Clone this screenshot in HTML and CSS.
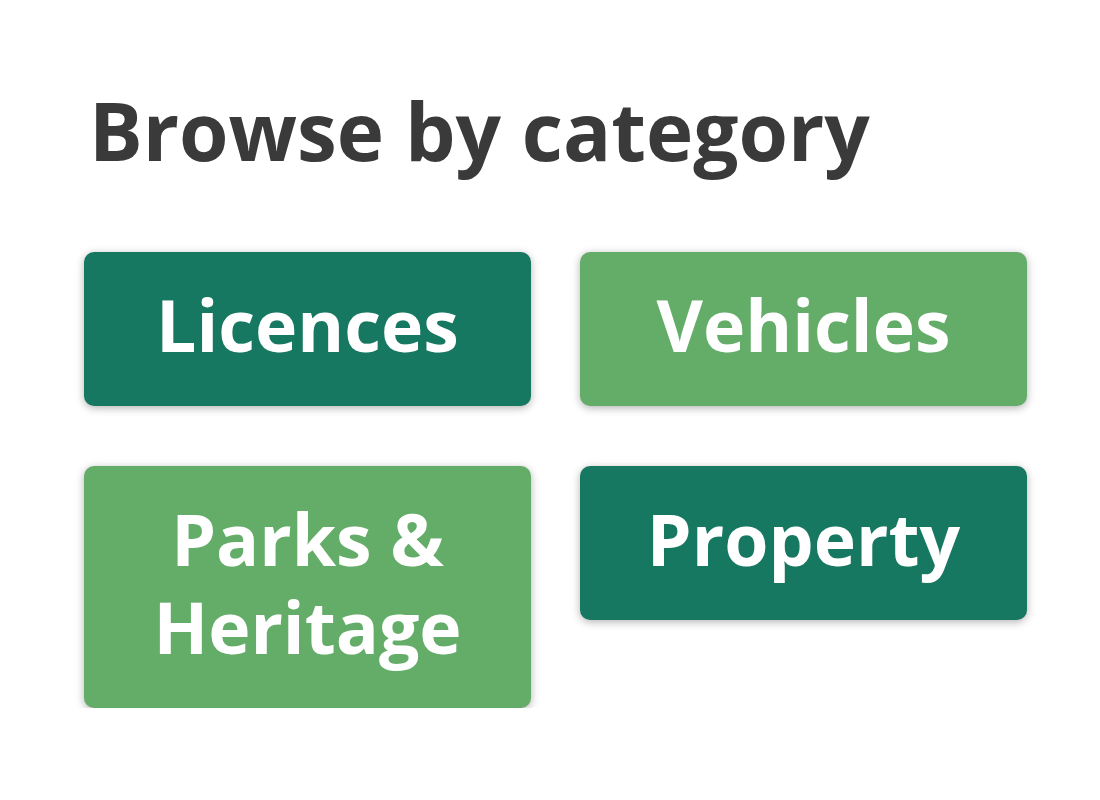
FILE: index.html
```html
<!DOCTYPE html>
<html>
<head>
<meta charset="utf-8">
<link rel="stylesheet" href="styles.css">
</head>
<body>
<main class="page">
  <h1 class="title">Browse by category</h1>
  <div class="grid">
    <a class="card dark">Licences</a>
    <a class="card light">Vehicles</a>
    <a class="card light">Parks &amp;<br>Heritage</a>
    <a class="card dark">Property</a>
  </div>
</main>
</body>
</html>
```
FILE: styles.css
```css
html, body {
  margin: 0;
  padding: 0;
  background: #ffffff;
}
.page {
  padding: 75px 0 0 84px;
  font-family: "Open Sans", "Noto Sans", sans-serif;
}
.title {
  margin: 0 0 0 5px;
  font-size: 80px;
  font-weight: 700;
  line-height: normal;
  color: #3a3a3a;
}
.grid {
  margin-top: 68px;
  display: grid;
  grid-template-columns: 447px 447px;
  column-gap: 49px;
  row-gap: 60px;
  align-items: start;
}
.card {
  display: block;
  box-sizing: border-box;
  border-radius: 10px;
  padding: 29px 20px 37px;
  text-align: center;
  color: #ffffff;
  font-size: 71.5px;
  font-weight: 700;
  line-height: 88px;
  box-shadow: 0 2px 8px rgba(0, 0, 0, 0.3);
}
.dark {
  background: #167860;
}
.light {
  background: #64ad69;
}
```
